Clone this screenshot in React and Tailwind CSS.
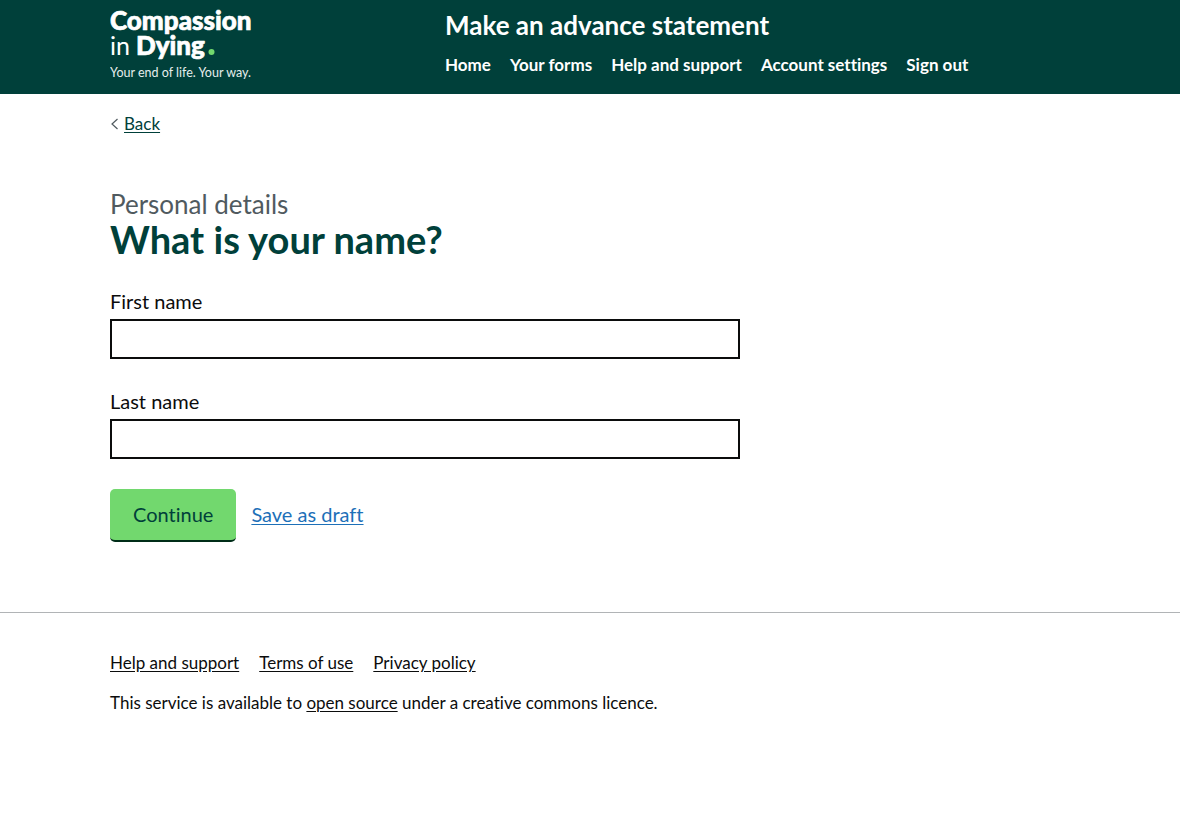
const navLinks = ["Home", "Your forms", "Help and support", "Account settings", "Sign out"];
const footerLinks = ["Help and support", "Terms of use", "Privacy policy"];

function Logo() {
  return (
    <a href="#" aria-label="Compassion in Dying" className="block w-fit">
      <svg width="160" height="80" viewBox="0 -6 160 80" fill="#fff" className="font-['Lato',sans-serif]">
        <g fontSize="26" fontWeight="900" stroke="#fff" strokeWidth="0.7" strokeLinejoin="round">
          <text x="0" y="22">Compassion</text>
          <text x="26" y="47">Dying</text>
        </g>
        <text x="0" y="47" fontSize="25">in</text>
        <circle cx="101.500" cy="44" r="3" fill="#72d86e" />
        <text x="0" y="69" fontSize="12.500" fill="#e6eeec">Your end of life. Your way.</text>
      </svg>
    </a>
  );
}

function Field({ id, label }) {
  return (
    <div className="mb-[30px]">
      <label htmlFor={id} className="mb-[5px] block text-[20px] leading-[25px]">{label}</label>
      <input id={id} type="text" className="block h-10 w-full border-2 border-[#0b0c0c] bg-white px-[5px] text-[20px] outline-none" />
    </div>
  );
}

export default function App() {
  return (
    <div className="font-['Lato',sans-serif] text-[#0b0c0c] [font-variant-ligatures:none]">
      <header className="bg-[#00403a] text-white">
        <div className="mx-auto grid max-w-[1020px] grid-cols-[1fr_2fr] px-[30px] pt-[2px] pb-3">
          <Logo />
          <div className="pt-[6px] pl-[15px]">
            <a href="#" className="block text-[26px] leading-[35px] font-bold">Make an advance statement</a>
            <nav className="mt-3 flex flex-wrap gap-x-[19px] text-[17px] leading-5 font-bold">
              {navLinks.map((t) => <a key={t} href="#">{t}</a>)}
            </nav>
          </div>
        </div>
      </header>

      <div className="mx-auto max-w-[1020px] px-[30px] pt-5">
        <a href="#" className="flex w-fit items-center gap-[5px] text-[17px] leading-5 text-[#00403a]">
          <svg width="9" height="12" viewBox="0 0 9 12" fill="none" stroke="#505a5f" strokeWidth="1.2" aria-hidden="true"><path d="M7.500 1 2 6l5.500 5" /></svg>
          <span className="underline underline-offset-2">Back</span>
        </a>
        <main className="pt-[55px] pb-[70px]">
          <form className="max-w-[630px]" onSubmit={(e) => e.preventDefault()}>
            <p className="text-[26px] leading-[30px] text-[#505a5f]">Personal details</p>
            <h1 className="mb-[30px] text-[38px] leading-10 font-bold text-[#00403a]">What is your name?</h1>
            <Field id="first-name" label="First name" />
            <Field id="last-name" label="Last name" />
            <div className="flex items-baseline gap-[15px] text-[20px] leading-[25px]">
              <button type="submit" className="h-[53px] rounded-[5px] border-b-2 border-[#002d18] bg-[#72d86e] px-[23px] text-[#00403a]">Continue</button>
              <a href="#" className="text-[#1d70b8] underline decoration-1 underline-offset-2">Save as draft</a>
            </div>
          </form>
        </main>
      </div>

      <footer className="border-t border-[#b1b4b6] py-10">
        <div className="mx-auto max-w-[1020px] px-[30px] text-[17px] leading-5">
          <nav className="mb-5 flex flex-wrap gap-x-5">
            {footerLinks.map((t) => <a key={t} href="#" className="underline underline-offset-2">{t}</a>)}
          </nav>
          <p>This service is available to <a href="#" className="underline underline-offset-2">open source</a> under a creative commons licence.</p>
        </div>
      </footer>
    </div>
  );
}
